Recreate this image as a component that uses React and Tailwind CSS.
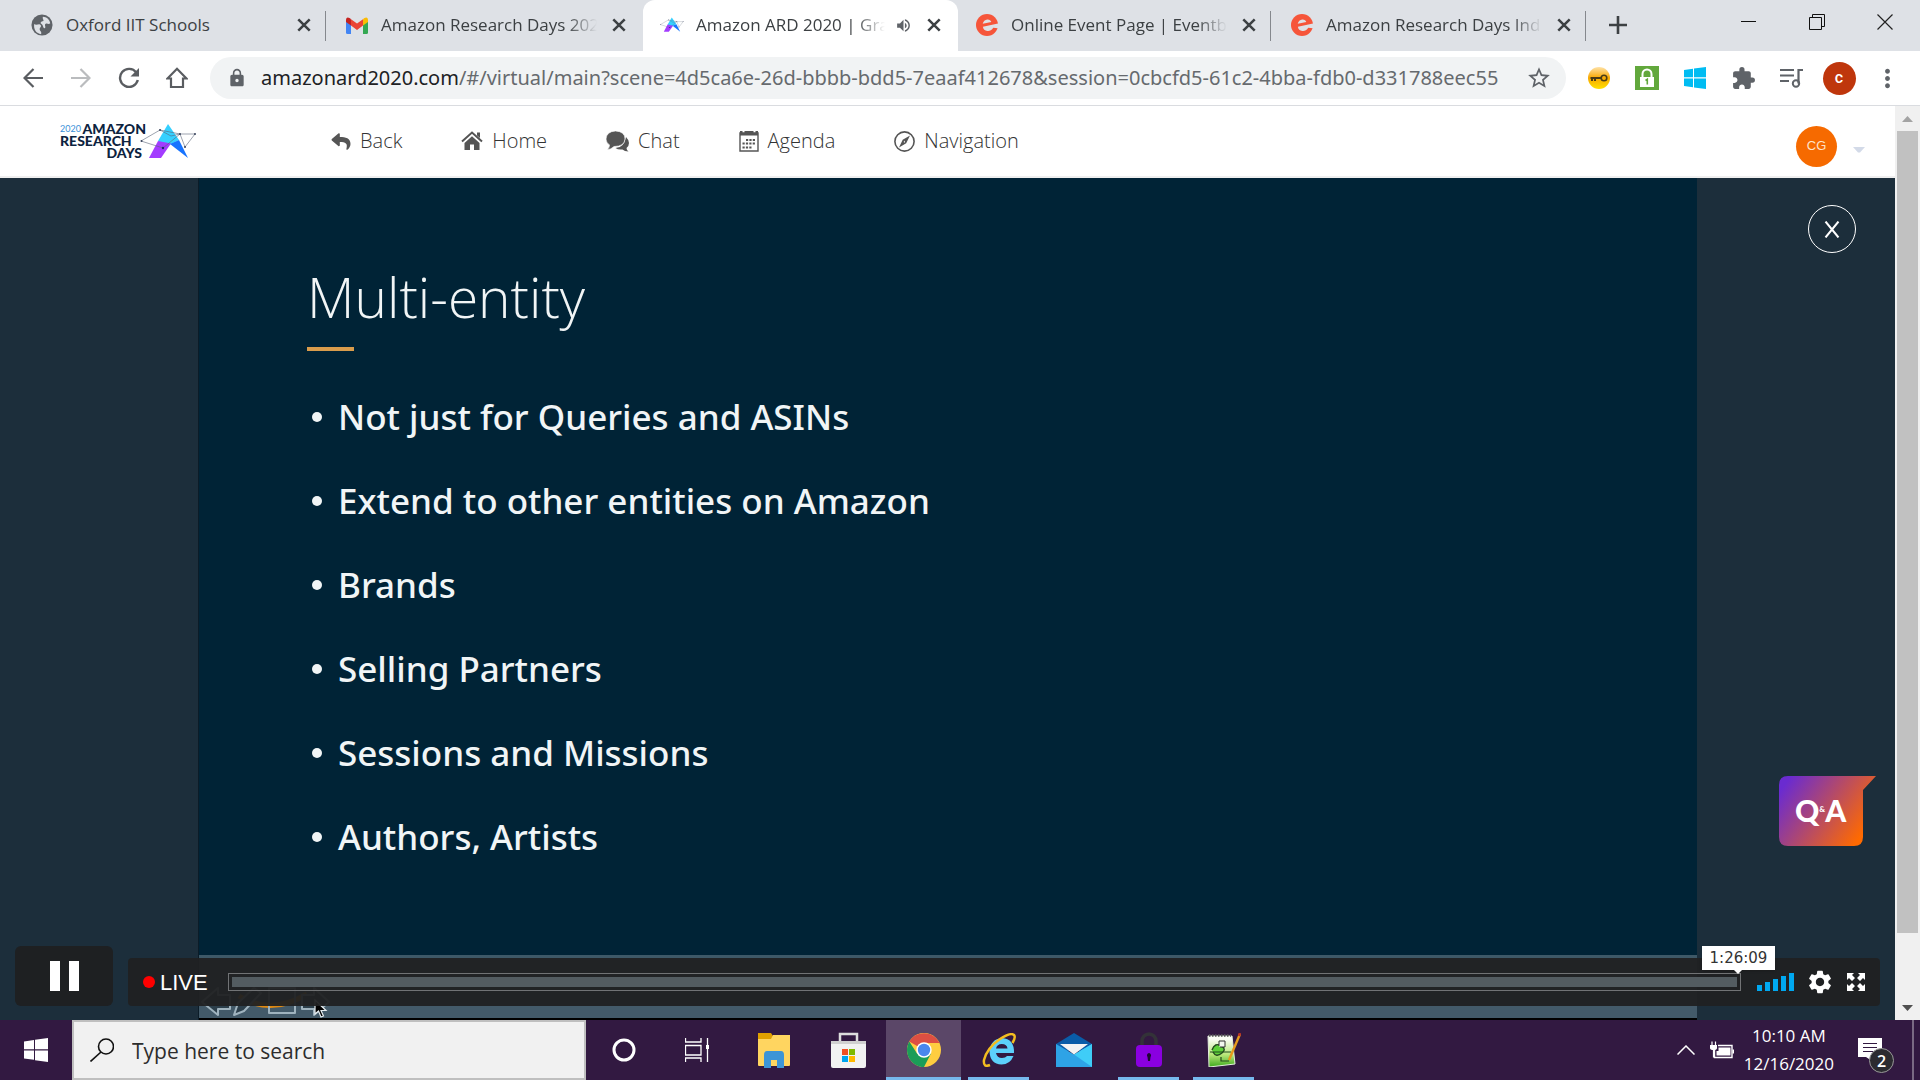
import React from "react";
import { MdStarBorder, MdExtension, MdQueueMusic, MdMoreVert, MdLock, MdVolumeUp, MdSettings } from "react-icons/md";
import { FaReply, FaComments } from "react-icons/fa";

const ui = "font-['Open_Sans','Noto_Sans',sans-serif]";

function ArdMark({ className }) {
  return (
    <svg className={className} viewBox="0 0 57 36" aria-hidden="true">
      <path d="M28 1 L18 18 L25 24 L39 17 Z" fill="#35d0ff" />
      <path d="M18 18 L9 35 H21 L31 20.500 Z" fill="#a33cff" />
      <path d="M39 17 L48 35 L30 21 Z" fill="#1673ff" />
      <path d="M1 18 L20 7 L40 11 L55 11 L45 24 L40 11 L23 25 L1 18 M20 7 L31 13 L40 11" fill="none" stroke="#5b6478" strokeWidth="0.600" />
      <circle cx="1.500" cy="18" r="1" fill="#39435c" />
      <circle cx="20" cy="7" r="1" fill="#39435c" />
      <circle cx="40" cy="11" r="1" fill="#39435c" />
      <circle cx="55" cy="11" r="1" fill="#39435c" />
      <circle cx="45" cy="24" r="1" fill="#39435c" />
      <circle cx="23" cy="25" r="1.200" fill="#1b2a6b" />
    </svg>
  );
}

function Globe() {
  return (
    <svg className="size-[22px]" viewBox="0 0 24 24" aria-hidden="true">
      <circle cx="12" cy="12" r="11.500" fill="#5f6368" />
      <path d="M3.500 11 C6 13 9 10 10.500 12 C12 14 9 15 9.500 17 C10 19 12 19.500 11 22 C6 21.500 2.500 17 3.500 11 Z" fill="#dee1e6" />
      <path d="M13 3 C17 3 20 6 21 10 C19 12 18 9.500 16 10.500 C14 12 17 14 15 15.500 C13 16 13.500 12 11.500 11 C9.500 10 11 8 13 8 C15 7.500 12 5 13 3 Z" fill="#dee1e6" />
    </svg>
  );
}

function Gmail() {
  return (
    <svg className="h-[17px] w-[22px]" viewBox="0 0 22 17" aria-hidden="true">
      <path d="M0 4 L5 7 V17 H1.500 Q0 17 0 15.500 Z" fill="#4285f4" />
      <path d="M22 4 L17 7 V17 H20.500 Q22 17 22 15.500 Z" fill="#34a853" />
      <path d="M5 2.200 L11 6.500 L17 2.200 V8.500 L11 13 L5 8.500 Z" fill="#ea4335" />
      <path d="M0 2.600 Q0.500 -1 4 1.300 L5 2.200 V8.500 L0 5 Z" fill="#c5221f" />
      <path d="M22 2.600 Q21.500 -1 18 1.300 L17 2.200 V8.500 L22 5 Z" fill="#fbbc04" />
    </svg>
  );
}

function Eventbrite() {
  return (
    <svg className="size-[22px]" viewBox="0 0 22 22" aria-hidden="true">
      <circle cx="11" cy="11" r="11" fill="#f6553a" />
      <path d="M6.700 9.800 C7.200 7.200 9 5.600 11.200 5.400 C13.300 5.200 14.800 6.300 15.300 7.900 Z" fill="#dee1e6" />
      <path d="M6.900 12.800 L22.500 9.300 L22 14.300 L17.300 13.800 C15.500 16.500 13.500 17.300 11.300 17 C8.800 16.700 7.200 15.200 6.900 12.800 Z" fill="#dee1e6" />
    </svg>
  );
}

function Cross({ className }) {
  return (
    <svg className={className} viewBox="0 0 14 14" aria-hidden="true">
      <path d="M2 2 L12 12 M12 2 L2 12" stroke="#3c4043" strokeWidth="2.200" />
    </svg>
  );
}

const tabs = [
  { title: "Oxford IIT Schools", icon: <Globe /> },
  { title: "Amazon Research Days 2020", icon: <Gmail /> },
  { title: "Amazon ARD 2020 | Grand", icon: <ArdMark className="w-6" />, active: true },
  { title: "Online Event Page | Eventbrite", icon: <Eventbrite /> },
  { title: "Amazon Research Days India", icon: <Eventbrite /> },
];

function Tab({ title, icon, active, line }) {
  return (
    <div className={"relative flex h-full w-[315px] shrink-0 items-center pl-[17px] pr-4 pb-px " + (active ? "rounded-t-xl bg-white" : "")}>
      <span className="flex w-6 shrink-0 justify-center">{icon}</span>
      <button className={"ml-3 min-w-0 flex-1 overflow-hidden whitespace-nowrap text-left text-[17px] text-[#3c4043] " + (title.length > 20 ? "[mask-image:linear-gradient(to_right,black_calc(100%-30px),transparent)]" : "")}>{title}</button>
      {active && <MdVolumeUp className="ml-2.5 size-[17px] shrink-0 text-[#5f6368]" />}
      <button aria-label="Close tab" className="ml-3.5 shrink-0"><Cross className="size-4" /></button>
      {line && <span className="absolute right-0.5 top-[11px] h-[30px] w-px bg-[#85888d]" />}
    </div>
  );
}

function TabStrip() {
  return (
    <div className="flex h-[51px] shrink-0 items-center bg-[#dee1e6] pl-[13px]">
      {tabs.map((t, i) => <Tab key={t.title} {...t} line={i !== 1 && i !== 2} />)}
      <button aria-label="New tab" className="ml-[18px] pb-px">
        <svg className="size-6" viewBox="0 0 24 24"><path d="M12 3 V21 M3 12 H21" stroke="#3c4043" strokeWidth="2.600" /></svg>
      </button>
      <div className="ml-auto flex items-center gap-[52px] pb-2 pr-[27px]">
        <button aria-label="Minimize"><svg className="size-4" viewBox="0 0 16 16"><path d="M0 7.500 H15" stroke="#111" strokeWidth="1" /></svg></button>
        <button aria-label="Restore"><svg className="size-4" viewBox="0 0 16 16"><path d="M0.500 3.500 H12.500 V15.500 H0.500 Z M3.500 3.500 V0.500 H15.500 V12.500 H12.500" fill="none" stroke="#111" /></svg></button>
        <button aria-label="Close window"><svg className="size-4" viewBox="0 0 16 16"><path d="M0.500 0.500 L15.500 15.500 M15.500 0.500 L0.500 15.500" stroke="#222" strokeWidth="1.200" /></svg></button>
      </div>
    </div>
  );
}

function ToolButton({ label, children }) {
  return <button aria-label={label} className="flex h-12 w-12 shrink-0 items-center justify-center text-[#5f6368]">{children}</button>;
}

function Toolbar() {
  return (
    <div className="flex h-[55px] shrink-0 items-center border-b border-[#dadce0] bg-white px-[9px]">
      <ToolButton label="Back"><svg className="size-5" viewBox="0 0 20 20"><path d="M20 10 H2 M10.500 1 L1.500 10 L10.500 19" fill="none" stroke="#5a5d61" strokeWidth="2.200" /></svg></ToolButton>
      <ToolButton label="Forward"><svg className="size-5" viewBox="0 0 20 20"><path d="M0 10 H18 M9.500 1 L18.500 10 L9.500 19" fill="none" stroke="#babcbe" strokeWidth="2.200" /></svg></ToolButton>
      <ToolButton label="Reload"><svg className="size-[22px]" viewBox="0 0 22 22"><path d="M18.300 5.500 A9 9 0 1 0 19.800 13" fill="none" stroke="#5a5d61" strokeWidth="2.400" /><path d="M21 1 V9.500 H12.500 Z" fill="#5a5d61" /></svg></ToolButton>
      <ToolButton label="Home"><svg className="size-[22px]" viewBox="0 0 22 22"><path d="M1.500 11.500 L11 1.800 L20.500 11.500 H17 V20 H5 V11.500 Z" fill="none" stroke="#5a5d61" strokeWidth="2.200" /></svg></ToolButton>
      <div className="ml-[9px] mr-[9px] flex h-[42px] min-w-0 flex-1 items-center rounded-full bg-[#f1f3f4] pl-[17px]">
        <MdLock className="size-5 shrink-0 text-[#5f6368]" />
        <button className="ml-3.5 min-w-0 flex-1 overflow-hidden whitespace-nowrap text-left font-['Noto_Sans',sans-serif] text-xl text-[#666a6e]">
          <span className="text-[#202124]">amazonard2020.com</span>/#/virtual/main?scene=4d5ca6e-26d-bbbb-bdd5-7eaaf412678&amp;session=0cbcfd5-61c2-4bba-fdb0-d331788eec55
        </button>
        <button aria-label="Bookmark" className="mr-3.5"><MdStarBorder className="size-[26px] text-[#5f6368]" /></button>
      </div>
      <ToolButton label="Key">
        <svg className="size-[22px]" viewBox="0 0 22 22">
          <defs><linearGradient id="key" x1="0" y1="0" x2="0" y2="1"><stop offset="0" stopColor="#ffe2a8" /><stop offset="0.500" stopColor="#f7a800" /><stop offset="1" stopColor="#ffe100" /></linearGradient></defs>
          <circle cx="11" cy="11" r="11" fill="url(#key)" />
          <circle cx="16" cy="11" r="2.800" fill="none" stroke="#4a3c16" strokeWidth="1.600" />
          <path d="M13 11 H2.500 M4 11 V14 M7 11 V14" stroke="#4a3c16" strokeWidth="2" />
        </svg>
      </ToolButton>
      <ToolButton label="Password vault">
        <svg className="size-6" viewBox="0 0 24 24">
          <rect width="24" height="24" fill="#62a83c" />
          <path d="M7.500 11 V8 A4.500 4.500 0 0 1 16.500 8 V11" fill="none" stroke="#fff" strokeWidth="2" />
          <rect x="5" y="11" width="14" height="10" fill="#fff" />
          <path d="M10.500 14.500 L12.300 13.300 V18.500" fill="none" stroke="#62a83c" strokeWidth="1.600" />
        </svg>
      </ToolButton>
      <ToolButton label="Windows"><svg className="size-[22px]" viewBox="0 0 22 22"><path d="M0 3 L9 1.700 V10.300 H0 Z M10 1.500 L22 0 V10.300 H10 Z M0 11.500 H9 V20.200 L0 19 Z M10 11.500 H22 V22 L10 20.400 Z" fill="#00bcf2" /></svg></ToolButton>
      <ToolButton label="Extensions"><MdExtension className="size-[25px]" /></ToolButton>
      <ToolButton label="Media">
        <svg className="h-5 w-[23px]" viewBox="0 0 23 20"><path d="M0 2 H14 M0 7.500 H14 M0 13 H9 M23 2 H18.500 V15.500" fill="none" stroke="#5f6368" strokeWidth="2.200" /><circle cx="16" cy="15.500" r="3.200" fill="none" stroke="#5f6368" strokeWidth="2" /></svg>
      </ToolButton>
      <ToolButton label="Profile"><span className="flex size-[33px] items-center justify-center rounded-full bg-[#bf360c] font-[Roboto,sans-serif] text-base font-medium text-white">c</span></ToolButton>
      <ToolButton label="Menu"><MdMoreVert className="size-[29px]" /></ToolButton>
    </div>
  );
}

const links = [
  { label: "Back", icon: <FaReply className="h-[19px] w-5 text-[#555]" /> },
  { label: "Home", icon: <svg className="h-5 w-[22px]" viewBox="0 0 22 20"><path d="M1 10.500 L11 1.500 L21 10.500" fill="none" stroke="#555" strokeWidth="2" /><path d="M16 1.500 H19 V7 L16 4.500 Z" fill="#555" /><path d="M11 5.200 L18.500 12 V19 H13 V13.500 H9 V19 H3.500 V12 Z" fill="#555" /></svg> },
  { label: "Chat", icon: (
    <svg className="h-[21px] w-[23px]" viewBox="0 0 23 21">
      <path d="M20 6 Q23 9 23 12 Q23 15 20.500 17 Q20.500 19 22.500 20.500 Q18.500 20.500 16.500 18.500 Q12 19 9.500 17 Q18 17 20 6 Z" fill="#555" />
      <path d="M9.500 0 Q19 0.500 19 8 Q18.500 15.500 8 15.500 Q5 18.500 1.500 18.500 Q3.500 16.500 3.500 14 Q0 11.500 0 8 Q0.500 0.500 9.500 0 Z" fill="#555" stroke="#fff" strokeWidth="0.600" />
    </svg>) },
  { label: "Agenda", icon: (
    <svg className="h-[22px] w-5" viewBox="0 0 20 22">
      <path d="M1 3 H19 V21 H1 Z" fill="none" stroke="#555" strokeWidth="1.400" />
      <path d="M1 1 H3.500 V3 H5.500 V1 H14.500 V3 H16.500 V1 H19 V5.500 H1 Z" fill="#555" />
      <path d="M7 10 H17 M3.500 13.500 H17 M3.500 17.500 H13.500" stroke="#555" strokeWidth="2" strokeDasharray="2.200 1.200" />
    </svg>) },
  { label: "Navigation", icon: (
    <svg className="size-[21px]" viewBox="0 0 21 21">
      <circle cx="10.500" cy="10.500" r="9.600" fill="none" stroke="#555" strokeWidth="1.600" />
      <path d="M16 4.500 L12.200 12.300 L5 16.500 L8.700 8.700 Z M11 9.500 L9.500 11 L10.800 11.800 Z" fill="#555" fillRule="evenodd" />
    </svg>) },
];

function SiteHeader() {
  return (
    <header className="flex h-[72px] shrink-0 items-center border-b-2 border-[#efefef] bg-white pl-[60px] pr-[30px]">
      <a href="#home" className="flex h-9 w-[140px] shrink-0">
        <span className="w-[86px] shrink-0 whitespace-nowrap font-[Lato,sans-serif] text-[14px] font-black leading-3 text-[#0d2340]">
          <span className="flex justify-between"><span className="text-[9px] font-normal text-[#3a8fd8]">2020</span><span>AMAZON</span></span>
          <span className="block">RESEARCH</span>
          <span className="block pr-1 text-right">DAYS</span>
        </span>
        <ArdMark className="-ml-1.5 h-9 w-[57px] shrink-0" />
      </a>
      <nav className="ml-[131px] flex items-center gap-[59px]">
        {links.map((l) => (
          <a key={l.label} href={"#" + l.label.toLowerCase()} className="flex items-center gap-[9px] text-xl font-light text-[#333]">
            {l.icon}<span>{l.label}</span>
          </a>
        ))}
      </nav>
      <button className="ml-auto flex items-center gap-4 pt-2.5">
        <span className="flex size-[41px] items-center justify-center rounded-full bg-[#f66a00] font-['Liberation_Sans',sans-serif] text-[13px] text-[#ffe3c8]">CG</span>
        <svg className="mt-2 h-1.5 w-3" viewBox="0 0 12 6"><path d="M0 0 H12 L7 5.500 H5 Z" fill="#d3dae8" /></svg>
      </button>
    </header>
  );
}

const bullets = [
  "Not just for Queries and ASINs",
  "Extend to other entities on Amazon",
  "Brands",
  "Selling Partners",
  "Sessions and Missions",
  "Authors, Artists",
];

function Slide() {
  return (
    <section className="mx-[198px] flex min-w-0 flex-1 flex-col border-l border-[#0b1c28] bg-[#002336] text-[#f1f5f6]">
      <div className="min-h-0 flex-1 pl-[108px] pt-[84px]">
        <h1 className="font-['Open_Sans',sans-serif] text-[55px] font-light leading-[70px]">Multi-entity</h1>
        <div className="mt-[15px] h-1 w-[47px] bg-[#d99c4c]" />
        <ul className="mt-6 font-['Noto_Sans',sans-serif] text-[35px] font-medium">
          {bullets.map((b) => (
            <li key={b} className="flex h-[84px] items-center gap-4 pl-[5px]">
              <span className="size-2.5 shrink-0 rounded-full bg-[#f1f5f6]" />
              <span>{b}</span>
            </li>
          ))}
        </ul>
      </div>
      <div className="flex h-[65px] shrink-0 items-end border-b-2 border-t-3 border-b-black border-t-[#3d5867] bg-[#435a69]">
        <svg className="h-[34px] w-[140px]" viewBox="198 984 140 34" aria-hidden="true">
          <path d="M238 996 Q270 1016 306 994" fill="none" stroke="#e08a12" strokeWidth="5" />
          <g fill="#2c3f4b" stroke="#9fb3be" strokeWidth="2" strokeLinejoin="round">
            <path d="M201 1002 L217 988 V995 H229 V1009 H217 V1015 Z" />
            <path d="M233 1015 L237 1003 L253 988 L260 993 L243 1011 Z" />
            <path d="M268 988 H294 V1013 H268 Z" fill="none" />
            <path d="M328 1002 L313 988 V995 H301 V1009 H313 V1015 Z" />
          </g>
          <path d="M314 1000 V1014 L317.500 1011 L320 1017 L322.500 1016 L320 1010.500 H325 Z" fill="#000" stroke="#e6edf0" strokeWidth="1.200" />
        </svg>
      </div>
    </section>
  );
}

function Player() {
  return (
    <div className="absolute inset-x-0 bottom-0 flex items-end gap-[15px] pb-3.5 pl-[15px] pr-[15px]">
      <button aria-label="Pause" className="flex h-[60px] w-[98px] shrink-0 items-center justify-center gap-[9px] rounded-md bg-[#1e2022]">
        <span className="h-[30px] w-[10px] bg-white" /><span className="h-[30px] w-[10px] bg-white" />
      </button>
      <div className="flex h-12 min-w-0 flex-1 items-center rounded-sm bg-[#202122]/95 pl-[15px] pr-[15px]">
        <span className="size-3 shrink-0 rounded-full bg-[#f00]" />
        <span className="ml-[5px] w-12 shrink-0 font-['Liberation_Sans',sans-serif] text-[22px] text-white">LIVE</span>
        <div className="relative ml-5 flex min-w-0 flex-1">
          <input type="range" aria-label="Seek" defaultValue="100" className="h-[18px] w-full appearance-none border border-[#717375] bg-[#535c61] bg-clip-content p-[3px] [&::-webkit-slider-thumb]:w-0 [&::-webkit-slider-thumb]:appearance-none" />
          <div className="absolute -right-[34px] bottom-[21px] h-6 w-[73px] bg-white text-center font-['DejaVu_Sans',sans-serif] text-[15px] leading-6 text-[#333] shadow">
            1:26:09
            <svg className="absolute left-8 top-full h-1 w-2" viewBox="0 0 8 4"><path d="M0 0 H8 L4 4 Z" fill="#fff" /></svg>
          </div>
        </div>
        <button aria-label="Volume" className="ml-4 flex h-[18px] shrink-0 items-end gap-[3px]">
          <span className="h-1.5 w-[5px] bg-[#00a8f0]" /><span className="h-[9px] w-[5px] bg-[#00a8f0]" /><span className="h-3 w-[5px] bg-[#00a8f0]" /><span className="h-[15px] w-[5px] bg-[#00a8f0]" /><span className="h-[18px] w-[5px] bg-[#00a8f0]" />
        </button>
        <button aria-label="Settings" className="ml-3 shrink-0"><MdSettings className="size-7 text-white" /></button>
        <button aria-label="Full screen" className="ml-[13px] shrink-0">
          <svg className="size-[18px]" viewBox="0 0 18 18">
            <path d="M0 0 H7 L5 2 L8 5 L5 8 L2 5 L0 7 Z M18 0 V7 L16 5 L13 8 L10 5 L13 2 L11 0 Z M0 18 V11 L2 13 L5 10 L8 13 L5 16 L7 18 Z M18 18 H11 L13 16 L10 13 L13 10 L16 13 L18 11 Z" fill="#fff" />
          </svg>
        </button>
      </div>
    </div>
  );
}

function Stage() {
  return (
    <main className="relative flex min-h-0 flex-1 bg-[#1c2e3b]">
      <Slide />
      <button aria-label="Close video" className="absolute right-[39px] top-[27px] flex size-12 items-center justify-center rounded-full border border-white">
        <svg className="h-[17px] w-4" viewBox="0 0 16 17"><path d="M1.500 0.500 L14.500 16.500 M14.500 0.500 L1.500 16.500" stroke="#fff" strokeWidth="2" /></svg>
      </button>
      <button className="absolute bottom-[174px] right-[19px] flex h-[70px] w-[97px] items-center bg-[linear-gradient(125deg,#6a2bd0_8%,#ff6a00_85%)] pb-0.5 pl-4 font-[Lato,sans-serif] text-3xl font-black text-white [clip-path:path('M9_0_H97_L84_14_V61_Q84_70_75_70_H9_Q0_70_0_61_V9_Q0_0_9_0_Z')]">
        Q<span className="text-[8px]">&amp;</span>A
      </button>
      <Player />
    </main>
  );
}

function Scrollbar() {
  return (
    <div className="flex w-[25px] shrink-0 flex-col items-center bg-[#f0f0f0]" aria-hidden="true">
      <div className="flex h-[25px] items-center"><svg className="h-1.5 w-[11px]" viewBox="0 0 11 6"><path d="M0 6 L5.500 0 L11 6 Z" fill="#a3a3a3" /></svg></div>
      <div className="w-[21px] flex-1 bg-[#c1c1c1]" />
      <div className="flex h-[87px] items-end pb-[9px]"><svg className="h-1.5 w-[11px]" viewBox="0 0 11 6"><path d="M0 0 L5.500 6 L11 0 Z" fill="#505050" /></svg></div>
    </div>
  );
}

const apps = [
  { label: "Cortana", art: <svg className="size-6" viewBox="0 0 24 24"><circle cx="12" cy="12" r="10" fill="none" stroke="#fff" strokeWidth="3" /></svg> },
  { label: "Task view", art: <svg className="mr-1 h-6 w-6" viewBox="0 0 24 24"><path d="M0.500 0 V4 H16 V0 M0.500 24 V20 H16 V24 M0.500 7.500 H16 V17 H0.500 Z M22.500 0 V24" fill="none" stroke="#fff" strokeWidth="1.300" /><path d="M21 7 H24 V11 H21 Z" fill="#fff" /></svg> },
  { label: "File Explorer", art: <svg className="h-9 w-8" viewBox="0 0 32 36"><path d="M0 1 H13 L15 4 V9 H0 Z" fill="#e0a000" /><path d="M0 7 H13 L15 3 H32 V33 Q32 34 31 34 H1 Q0 34 0 33 Z" fill="#ffd560" /><path d="M6 36 V23 Q6 19 9 19 H23 Q26 19 26 23 V36 H19 V28 H13 V36 Z" fill="#3d95d6" /></svg> },
  { label: "Microsoft Store", art: <svg className="h-9 w-[35px]" viewBox="0 0 35 36"><path d="M9 13 V2 H26 V13" fill="none" stroke="#ddd" strokeWidth="2.500" /><path d="M0 9 H35 V34 Q35 36 33 36 H2 Q0 36 0 34 Z" fill="#f2f2f2" /><path d="M0 9 H35 V12 H0 Z" fill="#d0d0d0" /><path d="M11 17 H17 V23 H11 Z" fill="#f25022" /><path d="M18 17 H24 V23 H18 Z" fill="#7fba00" /><path d="M11 24 H17 V30 H11 Z" fill="#00a4ef" /><path d="M18 24 H24 V30 H18 Z" fill="#ffb900" /></svg> },
  { label: "Chrome", active: true, open: true, art: <svg className="size-[34px]" viewBox="0 0 34 34"><circle cx="17" cy="17" r="17" fill="#ffcd40" /><path d="M17 17 L2.300 8.500 A17 17 0 0 1 31.700 8.800 L33 10 H17 Z" fill="#dd4f43" /><path d="M2.300 8.500 A17 17 0 0 0 17 34 L24 20.500 H17 L10 20.500 Z" fill="#1b9d58" /><circle cx="17" cy="17" r="7.700" fill="#fff" /><circle cx="17" cy="17" r="6.200" fill="#4a87ee" /></svg> },
  { label: "Internet Explorer", open: true, art: <svg className="size-[34px]" viewBox="0 0 34 34"><path d="M32 20 H14 Q15 25 20 25 Q23.500 25 25 23 H31.500 Q28 31.500 19.500 31.500 Q8 31 7.500 18.500 Q8.500 6 20 5 Q32.500 6 32 20 Z M14 15.500 H25.500 Q25 11 19.800 11 Q15 11 14 15.500 Z" fill="#5cd0fb" fillRule="evenodd" /><path d="M8 32 Q1 35 2 27 Q5 15 18 6 Q29 -1 32 2 Q34 4 30.500 10" fill="none" stroke="#f3bd20" strokeWidth="2.500" /></svg> },
  { label: "Mail", art: <svg className="h-[34px] w-9" viewBox="0 0 36 34"><path d="M0 11 L18 0 L36 11 V18 H0 Z" fill="#0a5ca8" /><path d="M0 11 L18 21.500 L36 11 V34 H0 Z" fill="#2ea3e6" /><path d="M4 11 H32 L18 21.500 Z" fill="#f3f3f3" /><path d="M36 11 L18 21.500 L36 34 Z" fill="#3fcdf7" /></svg> },
  { label: "Lock", open: true, art: <svg className="h-9 w-[26px]" viewBox="0 0 26 36"><path d="M6 14 V9 A7 7 0 0 1 20 9 V14" fill="none" stroke="#333238" strokeWidth="3.500" /><rect y="13" width="26" height="22" rx="4" fill="#8a00e0" /><path d="M13 21 A2.500 2.500 0 0 1 14.500 25 L14 29 H12 L11.500 25 A2.500 2.500 0 0 1 13 21 Z" fill="#1d0730" /></svg> },
  { label: "Notepad++", open: true, art: <svg className="h-[34px] w-[34px]" viewBox="0 0 34 34"><defs><linearGradient id="pad" x1="0" y1="0" x2="0" y2="1"><stop offset="0.100" stopColor="#fbfdf6" /><stop offset="0.600" stopColor="#b9e77a" /><stop offset="1" stopColor="#3da91c" /></linearGradient></defs><path d="M1 3 L25 3 L28 31 L2 34 Z" fill="url(#pad)" stroke="#e4eedd" /><path d="M2 2.500 H24" stroke="#555" strokeWidth="2.500" strokeDasharray="1.500 1.500" /><path d="M5 17 Q8 9 14 13 Q20 16 15 20 Q9 25 6 19" fill="#5ed03a" stroke="#234a1c" strokeWidth="1.400" /><path d="M12 13 V8 H18 V14 H13" fill="#f3f7ef" stroke="#333" /><path d="M3 19 H24 M14 24 V28 H22" fill="none" stroke="#234a1c" strokeWidth="1.200" /><path d="M22 27 L33 1" stroke="#e59a1c" strokeWidth="2.400" /><path d="M32 3 L33 0" stroke="#b73226" strokeWidth="2.500" /></svg> },
];

function Taskbar() {
  return (
    <footer className="flex h-[60px] shrink-0 items-center bg-[#321941] text-white">
      <button aria-label="Start" className="flex h-full w-[72px] shrink-0 items-center justify-center">
        <svg className="size-6" viewBox="0 0 24 24"><path d="M0 3.500 L10 2 V11.300 H0 Z M11 1.800 L24 0 V11.300 H11 Z M0 12.500 H10 V21.800 L0 20.500 Z M11 12.500 H24 V24 L11 22.200 Z" fill="#fff" /></svg>
      </button>
      <label className="flex h-full w-[514px] items-center border-2 border-[#bfbfbf] bg-[#f1f1f1] pl-4">
        <svg className="size-6 shrink-0" viewBox="0 0 24 24"><circle cx="16" cy="8.500" r="7.500" fill="none" stroke="#111" strokeWidth="1.600" /><path d="M11 14 L0.500 23.500" stroke="#111" strokeWidth="1.600" /></svg>
        <input type="text" aria-label="Search" placeholder="Type here to search" className="ml-[18px] min-w-0 flex-1 bg-transparent pt-1 text-[21px] outline-none placeholder:text-[#2d2d2d]" />
      </label>
      {apps.map((a) => (
        <button key={a.label} aria-label={a.label} className={"flex h-full w-[75px] shrink-0 flex-col items-center " + (a.active ? "bg-[#5b4768]" : "")}>
          <span className="flex flex-1 items-center pt-[3px]">{a.art}</span>
          <span className={"h-[3px] " + (a.active ? "w-full " : "w-[61px] ") + (a.open ? "bg-[#76b9ed]" : "")} />
        </button>
      ))}
      <div className="ml-auto flex h-full items-center">
        <button aria-label="Show hidden icons"><svg className="h-2.5 w-[18px]" viewBox="0 0 18 10"><path d="M0.500 9.500 L9 1 L17.500 9.500" fill="none" stroke="#fff" strokeWidth="1.500" /></svg></button>
        <button aria-label="Battery" className="ml-[15px]">
          <svg className="h-[18px] w-6" viewBox="0 0 24 18"><path d="M4.500 8 V16.500 H22 V4.500 H8" fill="none" stroke="#fff" strokeWidth="1.400" /><path d="M8.500 6.500 H20.500 V14.500 H6.500 V10 H8.500 Z M22.500 8.500 H24 V12.500 H22.500 Z M0 4 H7 V7 Q7 9 3.500 9 Q0 9 0 7 Z" fill="#fff" /><path d="M2 0.500 V4 M5.500 0.500 V4 M3.500 9 V16.500" stroke="#fff" strokeWidth="1.200" /></svg>
        </button>
        <button className="ml-2.5 flex flex-col text-center text-[17px] leading-7"><span>10:10 AM</span><span>12/16/2020</span></button>
        <button aria-label="Notifications" className="relative ml-6 h-[42px] w-9">
          <svg className="absolute left-0 top-[9px] h-[23px] w-6" viewBox="0 0 24 23"><path d="M0 0 H24 V19 H14 V23 L8 19 H0 Z" fill="#fff" /><path d="M5 5.500 H19 M5 9.500 H19 M5 13.500 H15" stroke="#321941" strokeWidth="1.200" /></svg>
          <span className="absolute left-[11px] top-[19px] flex size-[25px] items-center justify-center rounded-full border border-[#999] bg-[#2b2b30] text-base font-semibold">2</span>
        </button>
        <span className="ml-[18px] mr-1.5 h-full w-0.5 bg-[#7a6a84]" />
      </div>
    </footer>
  );
}

export default function App() {
  return (
    <div className={"flex h-screen flex-col overflow-hidden bg-white " + ui}>
      <TabStrip />
      <Toolbar />
      <div className="flex min-h-0 flex-1">
        <div className="flex min-w-0 flex-1 flex-col">
          <SiteHeader />
          <Stage />
        </div>
        <Scrollbar />
      </div>
      <Taskbar />
    </div>
  );
}
